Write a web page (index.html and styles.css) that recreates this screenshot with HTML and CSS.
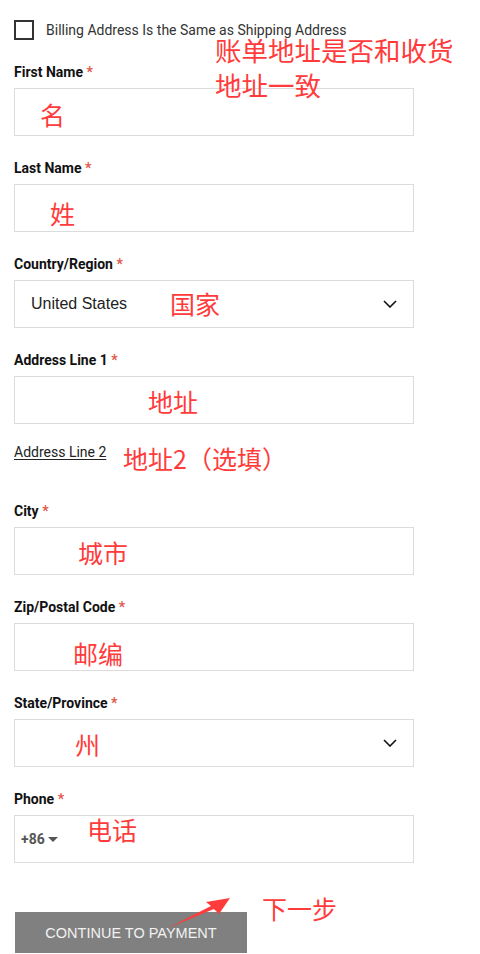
FILE: index.html
```html
<!DOCTYPE html>
<html lang="en">
<head>
<meta charset="utf-8">
<title>Billing Address</title>
<link rel="stylesheet" href="styles.css">
</head>
<body>
<main class="form">
  <label class="check-row">
    <span class="checkbox"></span>
    <span class="check-text">Billing Address Is the Same as Shipping Address</span>
  </label>

  <div class="field">
    <div class="label">First Name <span class="req">*</span></div>
    <div class="input"></div>
  </div>

  <div class="field">
    <div class="label">Last Name <span class="req">*</span></div>
    <div class="input"></div>
  </div>

  <div class="field">
    <div class="label">Country/Region <span class="req">*</span></div>
    <div class="input select">
      <span class="select-value">United States</span>
      <svg class="chevron" width="14" height="8" viewBox="0 0 14 8"><path d="M1 1l6 6 6-6" fill="none" stroke="#111" stroke-width="1.6"/></svg>
    </div>
  </div>

  <div class="field field-tight">
    <div class="label">Address Line 1 <span class="req">*</span></div>
    <div class="input"></div>
  </div>

  <div class="optional"><a class="link">Address Line 2</a></div>

  <div class="field">
    <div class="label">City <span class="req">*</span></div>
    <div class="input"></div>
  </div>

  <div class="field">
    <div class="label">Zip/Postal Code <span class="req">*</span></div>
    <div class="input"></div>
  </div>

  <div class="field">
    <div class="label">State/Province <span class="req">*</span></div>
    <div class="input select">
      <span class="select-value"></span>
      <svg class="chevron" width="14" height="8" viewBox="0 0 14 8"><path d="M1 1l6 6 6-6" fill="none" stroke="#111" stroke-width="1.6"/></svg>
    </div>
  </div>

  <div class="field">
    <div class="label">Phone <span class="req">*</span></div>
    <div class="input phone">
      <span class="dial">+86</span><span class="caret"></span>
    </div>
  </div>

  <button class="continue">CONTINUE TO PAYMENT</button>

  <div class="note note-title t1">账单地址是否和收货</div>
  <div class="note note-title t2">地址一致</div>
  <div class="note n-first">名</div>
  <div class="note n-last">姓</div>
  <div class="note n-country">国家</div>
  <div class="note n-addr1">地址</div>
  <div class="note n-addr2">地址2（选填）</div>
  <div class="note n-city">城市</div>
  <div class="note n-zip">邮编</div>
  <div class="note n-state">州</div>
  <div class="note n-phone">电话</div>
  <div class="note n-next">下一步</div>
  <svg class="arrow" width="480" height="954" viewBox="0 0 480 954">
    <polygon points="168,928 211,906 206,902 230,898 219,914 214,909" fill="#ff3b3b"/>
  </svg>
</main>
</body>
</html>
```

FILE: styles.css
```css
* { box-sizing: border-box; }
html, body { margin: 0; padding: 0; background: #fff; }
body { font-family: Roboto, "Liberation Sans", Arial, sans-serif; color: #111; }

.form {
  position: relative;
  width: 480px;
  height: 954px;
  padding: 20px 0 0 14px;
  overflow: hidden;
}

.check-row {
  display: flex;
  align-items: center;
  gap: 12px;
  height: 20px;
  margin-bottom: 22px;
}
.checkbox {
  width: 20px;
  height: 20px;
  border: 2px solid #333;
  background: #fff;
  flex: none;
}
.check-text {
  font-size: 14px;
  color: #333;
  line-height: 14px;
}

.field { margin-bottom: 22px; }
.field-tight { margin-bottom: 18px; }
.label {
  width: fit-content;
  font-size: 14px;
  font-weight: 700;
  line-height: 20px;
  margin-bottom: 6px;
  color: #111;
}
.req { color: #e2574c; font-weight: 700; }

.input {
  width: 400px;
  height: 48px;
  border: 1px solid #dcdcdc;
  background: #fff;
}
.select {
  display: flex;
  align-items: center;
  justify-content: space-between;
  padding: 0 16px 0 16px;
}
.select-value {
  font-family: "Liberation Sans", Arial, sans-serif;
  font-size: 16px;
  color: #222;
}
.chevron { display: block; }

.phone {
  display: flex;
  align-items: center;
  padding-left: 6px;
}
.dial {
  font-size: 14px;
  font-weight: 700;
  color: #555;
}
.caret {
  width: 0;
  height: 0;
  margin-left: 3px;
  border-left: 5px solid transparent;
  border-right: 5px solid transparent;
  border-top: 5px solid #555;
}

.optional {
  line-height: 20px;
  margin-bottom: 39px;
}
.link {
  font-size: 14px;
  color: #222;
  text-decoration: underline;
  text-underline-offset: 2px;
}

.continue {
  display: block;
  margin: 49px 0 0 1px;
  width: 232px;
  height: 41px;
  border: 0;
  background: #808080;
  color: #f2f2f2;
  font-family: "Liberation Sans", Arial, sans-serif;
  font-size: 14.5px;
  padding: 0;
}

.note {
  position: absolute;
  font-family: "Noto Sans CJK SC", "Noto Sans", sans-serif;
  font-size: 25px;
  line-height: 25px;
  color: #ff3b3b;
  white-space: nowrap;
}
.note-title { left: 215px; font-size: 26.5px; line-height: 27px; }
.t1 { top: 36px; }
.t2 { top: 71px; }
.n-first { left: 40px; top: 102px; }
.n-last { left: 50px; top: 201px; }
.n-country { left: 170px; top: 291px; }
.n-addr1 { left: 148px; top: 389px; }
.n-addr2 { left: 123px; top: 446px; }
.n-city { left: 78px; top: 540px; }
.n-zip { left: 73px; top: 641px; }
.n-state { left: 75px; top: 732px; }
.n-phone { left: 87px; top: 817px; }
.n-next { left: 262px; top: 896px; }

.arrow {
  position: absolute;
  left: 0;
  top: 0;
  pointer-events: none;
}
```
